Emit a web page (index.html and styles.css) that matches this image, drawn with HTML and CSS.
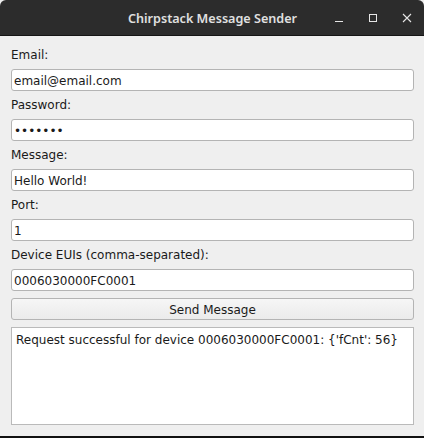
FILE: index.html
```html
<!DOCTYPE html>
<html>
<head>
<meta charset="utf-8">
<link rel="stylesheet" href="styles.css">
</head>
<body>
<div class="window">
  <header class="titlebar">
    <span class="title">Chirpstack Message Sender</span>
    <div class="controls">
      <svg class="ctl" width="10" height="10" viewBox="0 0 10 10"><line x1="1" y1="8.5" x2="9" y2="8.5" stroke="#e6e6e6" stroke-width="1"/></svg>
      <svg class="ctl" width="10" height="10" viewBox="0 0 10 10"><rect x="1.5" y="1.5" width="7" height="7" fill="none" stroke="#e6e6e6" stroke-width="1"/></svg>
      <svg class="ctl" width="10" height="10" viewBox="0 0 10 10"><path d="M1 1 L9 9 M9 1 L1 9" stroke="#e6e6e6" stroke-width="1.1"/></svg>
    </div>
  </header>
  <main class="content">
    <label class="lbl">Email:</label>
    <input class="field" type="text" value="email@email.com">
    <label class="lbl">Password:</label>
    <input class="field" type="password" value="secretp">
    <label class="lbl">Message:</label>
    <input class="field" type="text" value="Hello World!">
    <label class="lbl">Port:</label>
    <input class="field" type="text" value="1">
    <label class="lbl">Device EUIs (comma-separated):</label>
    <input class="field" type="text" value="0006030000FC0001">
    <button class="btn">Send Message</button>
    <div class="output">Request successful for device 0006030000FC0001: {'fCnt': 56}</div>
  </main>
</div>
</body>
</html>
```
FILE: styles.css
```css
html, body {
  margin: 0;
  padding: 0;
  background: #efefef;
}
.window {
  width: 424px;
  height: 438px;
  display: flex;
  flex-direction: column;
  box-sizing: border-box;
  border-bottom: 2px solid #111;
  background: #efefef;
  font-family: "DejaVu Sans", sans-serif;
  font-size: 12px;
  color: #1a1a1a;
}
.titlebar {
  position: relative;
  height: 35px;
  flex: none;
  background: #2c2c2c;
  border-bottom: 1px solid #151515;
  border-radius: 6px 6px 0 0;
  display: flex;
  align-items: center;
  justify-content: center;
}
.title {
  font-family: "Noto Sans", sans-serif;
  font-weight: 600;
  font-size: 12.6px;
  color: #e0e0e0;
  padding-top: 1px;
  padding-left: 1px;
}
.controls {
  position: absolute;
  right: 12px;
  top: 13px;
  display: flex;
  gap: 24px;
}
.ctl { display: block; }
.content {
  flex: 1;
  display: flex;
  flex-direction: column;
  gap: 6px;
  padding: 11px 10px 11px 11px;
}
.lbl {
  height: 16px;
  line-height: 16px;
}
.field {
  height: 22px;
  box-sizing: border-box;
  margin: 0;
  border: 1px solid #b4b4b4;
  border-radius: 3px;
  background: #fff;
  padding: 1px 2px 0 2px;
  font-family: "DejaVu Sans", sans-serif;
  font-size: 12px;
  color: #1a1a1a;
  outline: none;
}
.btn {
  height: 22px;
  margin: 1px 0 0 0;
  border: 1px solid #b4b4b4;
  border-radius: 3px;
  background: linear-gradient(#f6f6f6, #ebebeb);
  font-family: "DejaVu Sans", sans-serif;
  font-size: 12px;
  color: #1a1a1a;
  padding: 2px 0 0 0;
}
.output {
  flex: 1;
  margin-top: 1px;
  border: 1px solid #bababa;
  background: #fff;
  padding: 4px 4px;
  line-height: 16px;
  white-space: nowrap;
}
```
